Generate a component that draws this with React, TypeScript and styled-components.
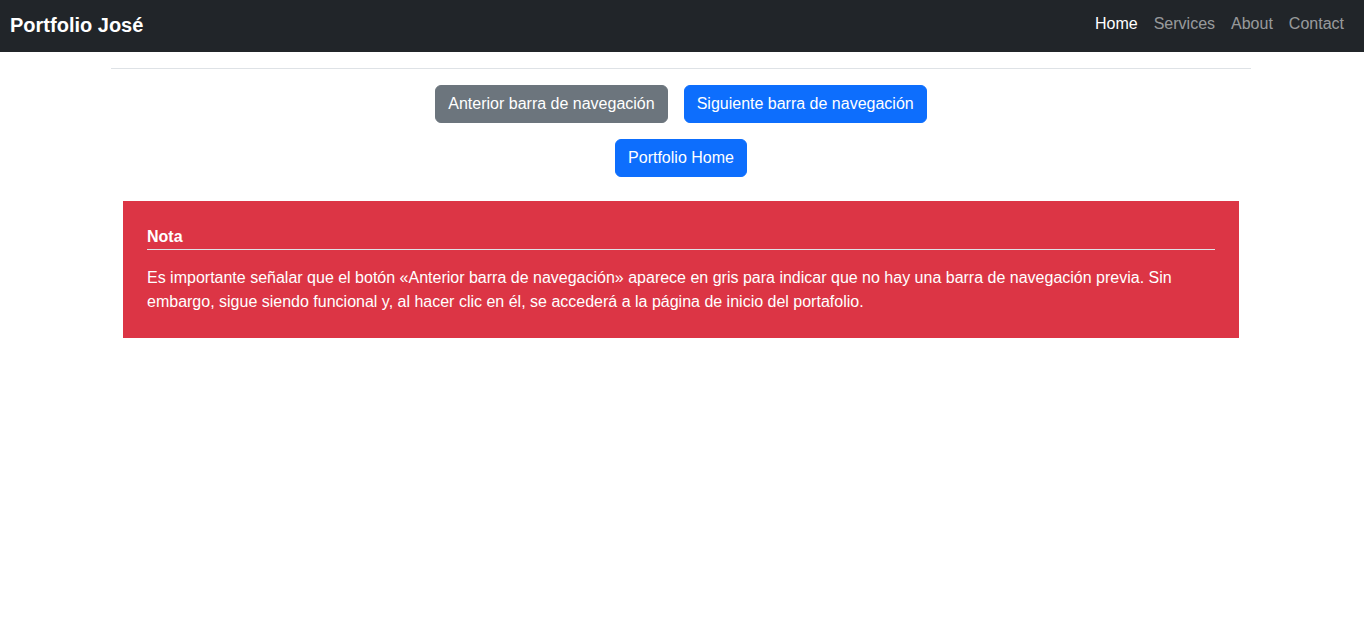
import { createGlobalStyle } from "styled-components";
import styled from "styled-components";

const GlobalStyle = createGlobalStyle`
  body {
    margin: 0;
    font-family: "Liberation Sans", Arial, sans-serif;
    font-size: 16px;
    line-height: 1.5;
    color: #212529;
    background: #fff;
  }
  * {
    box-sizing: border-box;
  }
`;

const Navbar = styled.nav`
  height: 52px;
  background: #212529;
  display: flex;
  align-items: center;
  justify-content: space-between;
  padding: 0 12px 0 10px;
`;

const Brand = styled.a`
  color: #fff;
  font-size: 20px;
  font-weight: 700;
  text-decoration: none;
  padding-bottom: 2px;
`;

const NavList = styled.ul`
  display: flex;
  list-style: none;
  margin: 0 0 4px;
  padding: 0;
`;

const NavLink = styled.a<{ $active?: boolean }>`
  display: block;
  padding: 8px;
  color: ${(p) => (p.$active ? "#fff" : "rgba(255, 255, 255, 0.55)")};
  text-decoration: none;
  font-size: 16px;
`;

const Container = styled.main`
  max-width: 1142px;
  padding-right: 2px;
  margin: 0 auto;
`;

const Rule = styled.hr`
  margin: 16px 0;
  border: 0;
  border-top: 1px solid #dee2e6;
`;

const ButtonRow = styled.div`
  display: flex;
  justify-content: center;
  gap: 16px;
  margin-bottom: 16px;
`;

const Button = styled.a<{ $variant: "primary" | "secondary" }>`
  display: inline-block;
  padding: 6px 12px;
  font-size: 16px;
  line-height: 24px;
  border-radius: 6px;
  color: #fff;
  text-decoration: none;
  border: 1px solid
    ${(p) => (p.$variant === "primary" ? "#0d6efd" : "#6c757d")};
  background: ${(p) => (p.$variant === "primary" ? "#0d6efd" : "#6c757d")};
`;

const Alert = styled.section`
  margin: 24px 12px 0;
  padding: 24px;
  background: #dc3545;
  color: #fff;
`;

const AlertHeading = styled.h4`
  margin: 0 0 16px;
  font-size: 16px;
  font-weight: 700;
  line-height: 24px;
  border-bottom: 1px solid #dee2e6;
`;

const AlertText = styled.p`
  margin: 0;
  font-size: 16px;
  line-height: 24px;
`;

const links = ["Home", "Services", "About", "Contact"];

export default function App() {
  return (
    <>
      <GlobalStyle />
      <Navbar>
        <Brand href="#">Portfolio José</Brand>
        <NavList>
          {links.map((l, i) => (
            <li key={l}>
              <NavLink href="#" $active={i === 0}>
                {l}
              </NavLink>
            </li>
          ))}
        </NavList>
      </Navbar>
      <Container>
        <Rule />
        <ButtonRow>
          <Button href="#" $variant="secondary">
            Anterior barra de navegación
          </Button>
          <Button href="#" $variant="primary">
            Siguiente barra de navegación
          </Button>
        </ButtonRow>
        <ButtonRow>
          <Button href="#" $variant="primary">
            Portfolio Home
          </Button>
        </ButtonRow>
        <Alert>
          <AlertHeading>Nota</AlertHeading>
          <AlertText>
            Es importante señalar que el botón «Anterior barra de navegación»
            aparece en gris para indicar que no hay una barra de navegación
            previa. Sin embargo, sigue siendo funcional y, al hacer clic en él,
            se accederá a la página de inicio del portafolio.
          </AlertText>
        </Alert>
      </Container>
    </>
  );
}
